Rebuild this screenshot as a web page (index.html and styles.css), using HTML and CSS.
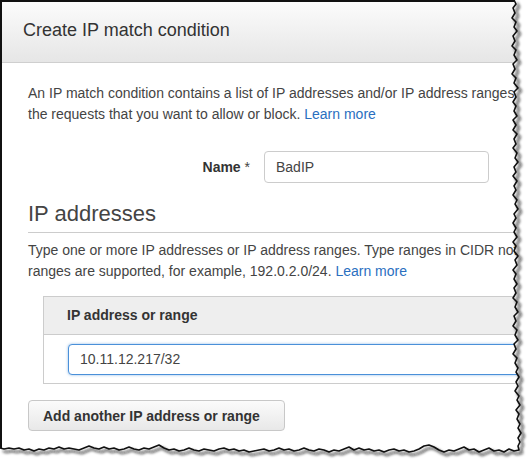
FILE: index.html
```html
<!DOCTYPE html>
<html>
<head>
<meta charset="utf-8">
<link rel="stylesheet" href="styles.css">
</head>
<body>
<div class="frame">
  <div class="page">
    <div class="header"><h1 class="title">Create IP match condition</h1></div>
    <div class="content">
      <p class="text intro">An IP match condition contains a list of IP addresses and/or IP address ranges that you want to use to identify<br>the requests that you want to allow or block. <a class="link" href="#">Learn more</a></p>
      <div class="name-row">
        <label class="label"><b>Name</b> *</label>
        <div class="input name-input">BadIP</div>
      </div>
      <h2 class="section">IP addresses</h2>
      <p class="text desc">Type one or more IP addresses or IP address ranges. Type ranges in CIDR notation. Only /8, /16, /24 and /32<br>ranges are supported, for example, 192.0.2.0/24. <a class="link" href="#">Learn more</a></p>
      <div class="table">
        <div class="thead">IP address or range</div>
        <div class="tbody">
          <div class="input ip-input">10.11.12.217/32</div>
        </div>
      </div>
      <button class="btn">Add another IP address or range</button>
    </div>
  </div>
  <svg class="torn" width="531" height="466" viewBox="0 0 531 466">
    <defs>
      <filter id="blur" x="-5%" y="-5%" width="110%" height="110%">
        <feGaussianBlur stdDeviation="1.6"/>
      </filter>
    </defs>
    <path fill="#fff" d="M531,0 L514,0 L516,4 L513,8 L515,13 L512,18 L516,22 L514,27 L517,31 L513,36 L515,41 L512,46 L516,50 L514,55 L517,60 L513,64 L515,69 L512,74 L516,78 L514,83 L518,88 L514,92 L516,97 L513,102 L516,106 L514,111 L517,116 L513,120 L516,125 L513,130 L517,134 L514,139 L516,144 L513,148 L517,153 L515,158 L518,162 L514,167 L516,172 L513,176 L517,181 L514,186 L516,190 L513,195 L517,200 L515,204 L518,209 L514,214 L516,218 L513,223 L516,228 L514,232 L517,237 L513,242 L516,246 L514,251 L518,256 L515,260 L517,265 L513,270 L516,274 L514,279 L517,284 L514,288 L516,293 L513,298 L517,302 L515,307 L518,312 L514,316 L516,321 L513,326 L517,330 L515,335 L518,340 L514,344 L516,349 L513,354 L517,358 L515,363 L518,368 L516,372 L519,377 L516,382 L518,386 L515,391 L519,396 L517,400 L520,405 L516,410 L519,414 L517,419 L520,424 L518,428 L521,433 L518,438 L520,442 L518,446 L519,450 L514,451 L509,449 L504,452 L499,450 L494,451 L489,448 L484,450 L479,452 L474,449 L469,450 L464,447 L459,449 L454,451 L449,450 L444,452 L439,450 L434,447 L429,445 L424,446 L419,449 L414,451 L409,452 L404,450 L399,451 L394,449 L389,450 L384,452 L379,450 L374,451 L369,449 L364,450 L359,448 L354,450 L349,447 L344,449 L339,451 L334,450 L329,452 L324,450 L319,449 L314,451 L309,450 L304,448 L299,450 L294,451 L289,449 L284,450 L279,448 L274,450 L269,451 L264,449 L259,450 L254,451 L249,452 L244,450 L239,451 L234,449 L229,450 L224,448 L219,449 L214,451 L209,450 L204,449 L199,451 L194,450 L189,448 L184,450 L179,451 L174,449 L169,450 L164,448 L159,445 L154,447 L149,449 L144,448 L139,450 L134,449 L129,447 L124,449 L119,450 L114,448 L109,449 L104,447 L99,449 L94,448 L89,446 L84,448 L79,450 L74,449 L69,448 L64,449 L59,447 L54,449 L49,448 L44,450 L39,449 L34,451 L29,449 L24,450 L19,448 L14,449 L9,448 L4,449 L0,448 L0,466 L531,466 Z"/>
    <g transform="translate(3,3)" filter="url(#blur)">
      <use href="#edge" stroke="#666" stroke-width="3"/>
    </g>
    <path id="edge" fill="none" stroke="#111" stroke-width="1.6" stroke-linejoin="round" d="M514,0 L516,4 L513,8 L515,13 L512,18 L516,22 L514,27 L517,31 L513,36 L515,41 L512,46 L516,50 L514,55 L517,60 L513,64 L515,69 L512,74 L516,78 L514,83 L518,88 L514,92 L516,97 L513,102 L516,106 L514,111 L517,116 L513,120 L516,125 L513,130 L517,134 L514,139 L516,144 L513,148 L517,153 L515,158 L518,162 L514,167 L516,172 L513,176 L517,181 L514,186 L516,190 L513,195 L517,200 L515,204 L518,209 L514,214 L516,218 L513,223 L516,228 L514,232 L517,237 L513,242 L516,246 L514,251 L518,256 L515,260 L517,265 L513,270 L516,274 L514,279 L517,284 L514,288 L516,293 L513,298 L517,302 L515,307 L518,312 L514,316 L516,321 L513,326 L517,330 L515,335 L518,340 L514,344 L516,349 L513,354 L517,358 L515,363 L518,368 L516,372 L519,377 L516,382 L518,386 L515,391 L519,396 L517,400 L520,405 L516,410 L519,414 L517,419 L520,424 L518,428 L521,433 L518,438 L520,442 L518,446 L519,450 L514,451 L509,449 L504,452 L499,450 L494,451 L489,448 L484,450 L479,452 L474,449 L469,450 L464,447 L459,449 L454,451 L449,450 L444,452 L439,450 L434,447 L429,445 L424,446 L419,449 L414,451 L409,452 L404,450 L399,451 L394,449 L389,450 L384,452 L379,450 L374,451 L369,449 L364,450 L359,448 L354,450 L349,447 L344,449 L339,451 L334,450 L329,452 L324,450 L319,449 L314,451 L309,450 L304,448 L299,450 L294,451 L289,449 L284,450 L279,448 L274,450 L269,451 L264,449 L259,450 L254,451 L249,452 L244,450 L239,451 L234,449 L229,450 L224,448 L219,449 L214,451 L209,450 L204,449 L199,451 L194,450 L189,448 L184,450 L179,451 L174,449 L169,450 L164,448 L159,445 L154,447 L149,449 L144,448 L139,450 L134,449 L129,447 L124,449 L119,450 L114,448 L109,449 L104,447 L99,449 L94,448 L89,446 L84,448 L79,450 L74,449 L69,448 L64,449 L59,447 L54,449 L49,448 L44,450 L39,449 L34,451 L29,449 L24,450 L19,448 L14,449 L9,448 L4,449 L0,448"/>
    <path fill="none" stroke="#111" stroke-width="2" d="M1,448 L1,1 L514,1"/>
  </svg>
</div>
</body>
</html>
```

FILE: styles.css
```css
* { box-sizing: border-box; }
html, body { margin: 0; padding: 0; background: #fff; }
.frame {
  position: relative;
  width: 531px;
  height: 466px;
  overflow: hidden;
  font-family: "Liberation Sans", Arial, sans-serif;
  color: #444;
}
.page {
  width: 760px;
}
.header {
  height: 63px;
  background: linear-gradient(#fcfcfc, #e6e6e6);
  border-bottom: 1px solid #cfcfcf;
  padding: 19px 0 0 23px;
}
.title {
  margin: 0;
  font-size: 18px;
  font-weight: normal;
  line-height: 22px;
  color: #333;
}
.content {
  padding: 0 0 0 28px;
}
.text {
  margin: 0;
  font-size: 14px;
  line-height: 20.5px;
  white-space: nowrap;
}
.intro { margin-top: 20px; }
.link { color: #2a6fbf; text-decoration: none; }
.name-row {
  display: grid;
  grid-template-columns: 222px 225px;
  column-gap: 14px;
  align-items: center;
  margin-top: 27px;
}
.label {
  text-align: right;
  font-size: 14px;
  color: #444;
}
.label b { color: #333; }
.input {
  height: 32px;
  border: 1px solid #ccc;
  border-radius: 4px;
  font-size: 14px;
  line-height: 30px;
  padding-left: 11px;
  color: #444;
  background: #fff;
}
.section {
  margin: 18px 0 0;
  font-size: 22px;
  font-weight: normal;
  line-height: 26px;
  color: #444;
  padding-bottom: 5px;
  border-bottom: 1px solid #ccc;
}
.desc { margin-top: 7px; }
.table {
  margin: 15px 0 0 15px;
  border: 1px solid #ccc;
}
.thead {
  height: 38px;
  background: #eee;
  border-bottom: 1px solid #ccc;
  padding-left: 23px;
  font-size: 14px;
  font-weight: bold;
  line-height: 37px;
  color: #333;
}
.tbody {
  padding: 9px 0 8px 24px;
}
.ip-input {
  height: 31px;
  line-height: 29px;
  border-color: #4a90d9;
  box-shadow: 0 0 3px rgba(74, 144, 217, 0.6);
}
.btn {
  display: block;
  margin-top: 16px;
  width: 257px;
  height: 31px;
  padding: 0 0 0 14px;
  text-align: left;
  font-family: "Liberation Sans", Arial, sans-serif;
  font-size: 14px;
  font-weight: bold;
  color: #333;
  background: linear-gradient(#fbfbfb, #e8e8e8);
  border: 1px solid #c8c8c8;
  border-radius: 4px;
}
.torn {
  position: absolute;
  left: 0;
  top: 0;
}
```
